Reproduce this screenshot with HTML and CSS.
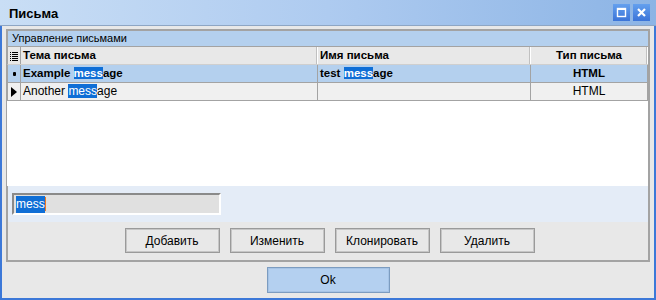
FILE: index.html
```html
<!DOCTYPE html>
<html>
<head>
<meta charset="utf-8">
<link rel="stylesheet" href="styles.css">
</head>
<body>
<div class="window">
  <div class="titlebar">
    <span class="title">Письма</span>
    <div class="tb-buttons">
      <span class="tb-btn"><svg width="17" height="17" viewBox="0 0 17 17"><rect x="4.5" y="4.5" width="8" height="8" fill="none" stroke="#fff" stroke-width="1.4"/><line x1="4" y1="5" x2="13" y2="5" stroke="#fff" stroke-width="2"/></svg></span>
      <span class="tb-btn"><svg width="17" height="17" viewBox="0 0 17 17"><path d="M5 5 L12 12 M12 5 L5 12" stroke="#fff" stroke-width="2.2"/></svg></span>
    </div>
  </div>
  <div class="content">
    <div class="group">
      <div class="group-caption">Управление письмами</div>
      <div class="grid">
        <div class="row head">
          <div class="cell ind"><svg width="8" height="10" viewBox="0 0 8 10"><g fill="#000"><rect x="0" y="1" width="1" height="1"/><rect x="2" y="1" width="6" height="1"/><rect x="0" y="3" width="1" height="1"/><rect x="2" y="3" width="6" height="1"/><rect x="0" y="5" width="1" height="1"/><rect x="2" y="5" width="6" height="1"/><rect x="0" y="7" width="1" height="1"/><rect x="2" y="7" width="6" height="1"/><rect x="0" y="9" width="1" height="1"/><rect x="2" y="9" width="6" height="1"/></g></svg></div>
          <div class="cell">Тема письма</div>
          <div class="cell">Имя письма</div>
          <div class="cell center">Тип письма</div>
        </div>
        <div class="row sel">
          <div class="cell ind"><span class="dot"></span></div>
          <div class="cell">Example <span class="hl">mess</span>age</div>
          <div class="cell">test <span class="hl">mess</span>age</div>
          <div class="cell center">HTML</div>
        </div>
        <div class="row">
          <div class="cell ind"><svg width="6" height="10" viewBox="0 0 6 10"><path d="M0 0 L6 5 L0 10 Z" fill="#000"/></svg></div>
          <div class="cell">Another <span class="hl">mess</span>age</div>
          <div class="cell"></div>
          <div class="cell center">HTML</div>
        </div>
        <div class="grid-empty"></div>
      </div>
      <div class="filter">
        <div class="textbox"><span class="hl">mess</span><span class="caret"></span></div>
      </div>
      <div class="actions">
        <button class="btn">Добавить</button>
        <button class="btn">Изменить</button>
        <button class="btn">Клонировать</button>
        <button class="btn">Удалить</button>
      </div>
    </div>
    <div class="footer">
      <button class="btn ok">Ok</button>
    </div>
  </div>
</div>
</body>
</html>
```

FILE: styles.css
```css
* { box-sizing: border-box; }
html, body { margin: 0; padding: 0; }
body {
  font-family: "Liberation Sans", Arial, sans-serif;
  font-size: 12px;
  color: #000;
  background: #e8e8e8;
}
.window {
  width: 656px;
  height: 300px;
  border: 2px solid #3c78d8;
  border-top: 0;
  background: #e8e8e8;
  display: flex;
  flex-direction: column;
}
.titlebar {
  height: 26px;
  margin: 0 -2px;
  padding: 0 6px 0 9px;
  background: linear-gradient(to right, #c9def5, #aecbf0 50%, #8cb4e5);
  border-bottom: 1px solid #8ea6c4;
  display: flex;
  align-items: center;
  justify-content: space-between;
  flex: none;
}
.title {
  font-weight: bold;
  font-size: 13px;
  padding-top: 1px;
}
.tb-buttons { display: flex; gap: 3px; margin-top: -1px; }
.tb-btn {
  width: 17px;
  height: 17px;
  background: linear-gradient(#64a0ee, #3b74d8);
  display: block;
}
.tb-btn svg { display: block; }
.content {
  flex: 1;
  padding: 3px 4px 0 4px;
  display: flex;
  flex-direction: column;
}
.group {
  border: 2px solid #a3a3a3;
  height: 233px;
  display: flex;
  flex-direction: column;
  flex: none;
}
.group-caption {
  height: 16px;
  background: #b4d0ee;
  padding-left: 4px;
  line-height: 15px;
  font-size: 11px;
  border-bottom: 1px solid #a3a3a3;
  flex: none;
}
.grid {
  background: #fff;
  flex: 1;
  display: flex;
  flex-direction: column;
  margin-left: -1px;
}
.row {
  display: grid;
  grid-template-columns: 13px 297px 213px 1fr;
  height: 18px;
  background: #f0f0f0;
  border-bottom: 1px solid #a3a3a3;
  border-left: 1px solid #a3a3a3;
  flex: none;
}
.row.head {
  background: #e8e8e8;
  font-weight: bold;
  font-size: 11.5px;
  border-bottom: 1px solid #cfcfcf;
}
.row.sel {
  background: #b4d0ee;
  font-weight: bold;
  font-size: 11.5px;
}
.cell {
  border-right: 1px solid #a3a3a3;
  padding-left: 2px;
  line-height: 17px;
  white-space: nowrap;
  overflow: hidden;
}
.row.head .cell { border-right: 1px solid #fff; box-shadow: inset -1px 0 0 #c0c0c0; }
.row.head .cell:first-child { border-right: 1px solid #a3a3a3; box-shadow: none; }
.cell:last-child { border-right: 1px solid #a3a3a3; }
.cell.center { text-align: center; padding-left: 0; }
.cell.ind {
  padding: 0;
  display: flex;
  align-items: center;
  justify-content: center;
}
.dot {
  width: 3px;
  height: 4px;
  background: #000;
  border-radius: 1px;
}
.hl {
  background: #0f6ed6;
  color: #fff;
}
.grid-empty {
  flex: 1;
  background: #fff;
}
.filter {
  height: 36px;
  background: #e4ecf7;
  padding: 7px 0 0 4px;
  flex: none;
}
.textbox {
  width: 209px;
  height: 22px;
  background: #e0e0e0;
  border: 2px solid #fff;
  border-top-color: #8a8a8a;
  border-left-color: #8a8a8a;
  padding-left: 2px;
  line-height: 17px;
  display: flex;
  align-items: center;
}
.caret {
  width: 1px;
  height: 14px;
  background: #f07a20;
}
.actions {
  height: 38px;
  flex: none;
  display: flex;
  justify-content: center;
  gap: 10px;
  padding-top: 6px;
  padding-left: 3px;
}
.btn {
  font-family: "Liberation Sans", Arial, sans-serif;
  font-size: 12px;
  color: #000;
  width: 95px;
  height: 25px;
  background: #e8e8e8;
  border: 1px solid #9a9a9a;
  box-shadow: inset 0 0 0 1px #c6c6c6;
  padding: 0;
  margin: 0;
}
.footer {
  display: flex;
  justify-content: center;
  padding-top: 5px;
}
.btn.ok {
  width: 123px;
  height: 26px;
  background: #b4d0f0;
  border: 1px solid #7c9cc0;
  box-shadow: inset 0 0 0 1px #a6c4e6;
}
```
